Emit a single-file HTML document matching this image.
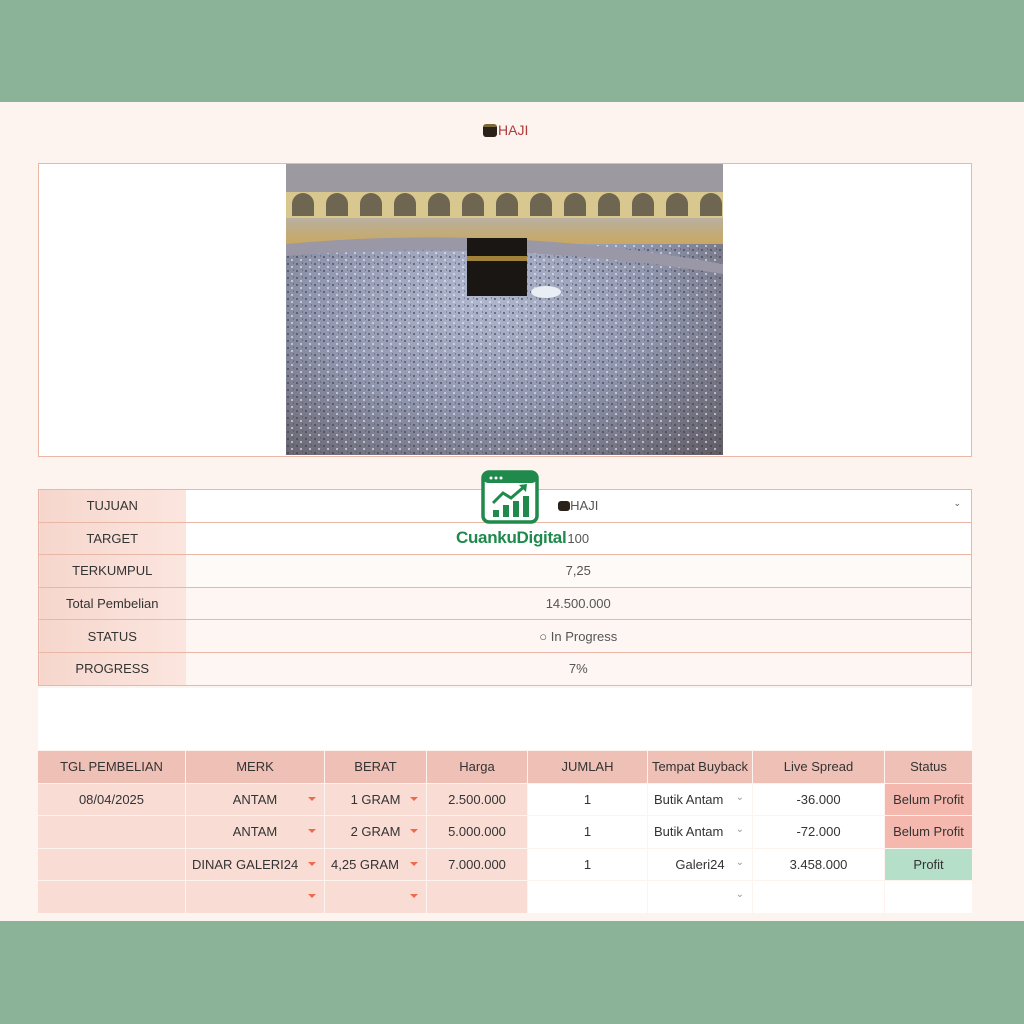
<!DOCTYPE html>
<html><head><meta charset="utf-8"><style>
*{margin:0;padding:0;box-sizing:border-box}
body{width:1024px;height:1024px;background:#fdf3ef;font-family:"Liberation Sans",sans-serif;position:relative;overflow:hidden;color:#333}
.band{position:absolute;left:0;width:1024px;background:#8ab398}
.abs{position:absolute}
.t1 td{border-bottom:1px solid #eab6a6;height:32.6px;font-size:13px;text-align:center}
.t1{border-collapse:collapse;border:1px solid #eab6a6}
.t1 td.l{background:linear-gradient(90deg,#f6d6cc,#fbe6df);width:147px;color:#333}
.t1 td.r{background:#fff;color:#555}
.t2{border-collapse:separate;border-spacing:1px 1px}
.t2 td{height:31.5px;font-size:13px;text-align:center;position:relative}
.t2 .h td{background:#efc0b6;color:#333}
.p{background:#f9ddd5}
.w{background:#fff}
.car{position:absolute;right:8px;top:13px;width:0;height:0;border-left:4px solid transparent;border-right:4px solid transparent;border-top:4px solid #ee6a4a}
.chev{position:absolute;right:8px;top:8px;font-size:10px;color:#999}
</style></head><body>
<div class="band" style="top:0;height:102px"></div>
<div class="band" style="top:921px;height:103px"></div>

<div class="abs" style="left:483px;top:124px;width:14px;height:13px;background:#2a2219;border-radius:3px;border-top:3px solid #7a6a3a"></div>
<div class="abs" style="left:498px;top:122px;font-size:14px;color:#b03a3a">HAJI</div>

<div class="abs" style="left:38px;top:163px;width:934px;height:294px;background:#fff;border:1px solid #eab6a6"></div>
<svg class="abs" style="left:286px;top:164px" width="437" height="291">
<defs>
<linearGradient id="a" x1="0" y1="0" x2="0" y2="1"><stop offset="0" stop-color="#b9b0a0"/><stop offset="1" stop-color="#c9a860"/></linearGradient>
<radialGradient id="c" cx="0.45" cy="0.45" r="0.8"><stop offset="0" stop-color="#b0b8d0"/><stop offset="0.5" stop-color="#8f95ad"/><stop offset="1" stop-color="#5e5860"/></radialGradient>
<pattern id="d" width="9" height="7" patternUnits="userSpaceOnUse"><rect x="1" y="1" width="2" height="2" fill="#3a3640" opacity=".55"/><rect x="5" y="4" width="2" height="2" fill="#e8ecf4" opacity=".6"/><rect x="7" y="0" width="1" height="2" fill="#4a4450" opacity=".4"/></pattern>
<pattern id="ar" width="34" height="26" patternUnits="userSpaceOnUse"><rect width="34" height="26" fill="#d8c890"/><path d="M6 26 V14 A11 11 0 0 1 28 14 V26Z" fill="#6e6650"/></pattern>
</defs>
<rect width="437" height="291" fill="url(#c)"/>
<rect y="80" width="437" height="211" fill="url(#d)"/>
<rect width="437" height="30" fill="#9c9aa0"/>
<rect y="28" width="437" height="26" fill="url(#ar)"/>
<rect y="54" width="437" height="26" fill="url(#a)"/>
<path d="M0 80 Q218 60 437 100 L437 110 Q218 75 0 92Z" fill="#9a97a6"/>
<rect x="181" y="74" width="60" height="58" fill="#1a1614"/>
<rect x="181" y="92" width="60" height="5" fill="#a0823a"/>
<ellipse cx="260" cy="128" rx="15" ry="6" fill="#e8eef4"/>
</svg>

<table class="t1 abs" style="left:38px;top:489px;width:934px">
<tr><td class="l">TUJUAN</td><td class="r" style="position:relative"><span style="display:inline-block;width:12px;height:10px;background:#2a2219;border-radius:3px;vertical-align:-1px"></span>HAJI<span style="position:absolute;right:10px;font-size:9px">&#8964;</span></td></tr>
<tr><td class="l">TARGET</td><td class="r">100</td></tr>
<tr><td class="l">TERKUMPUL</td><td class="r" style="background:#fefaf8">7,25</td></tr>
<tr><td class="l">Total Pembelian</td><td class="r" style="background:#fdf6f3">14.500.000</td></tr>
<tr><td class="l">STATUS</td><td class="r" style="background:#fdf6f3">○ In Progress</td></tr>
<tr><td class="l">PROGRESS</td><td class="r" style="background:#fdf6f3">7%</td></tr>
</table>

<svg class="abs" style="left:481px;top:470px" width="58" height="54"><rect x="2" y="2" width="54" height="50" rx="6" fill="#fff" stroke="#1f8a4c" stroke-width="3.5"/><rect x="2" y="2" width="54" height="11" rx="5" fill="#1f8a4c"/><circle cx="10" cy="8" r="1.5" fill="#fff"/><circle cx="15" cy="8" r="1.5" fill="#fff"/><circle cx="20" cy="8" r="1.5" fill="#fff"/><rect x="12" y="40" width="6" height="7" fill="#1f8a4c"/><rect x="22" y="35" width="6" height="12" fill="#1f8a4c"/><rect x="32" y="31" width="6" height="16" fill="#1f8a4c"/><rect x="42" y="26" width="6" height="21" fill="#1f8a4c"/><path d="M12 33 L22 23 L30 28 L44 16" stroke="#1f8a4c" stroke-width="3" fill="none"/><path d="M38 15 L46 14 L45 22Z" fill="#1f8a4c"/></svg>
<div class="abs" style="left:456px;top:528px;font-size:17px;font-weight:bold;color:#1f8a4c;letter-spacing:-0.3px">CuankuDigital</div>

<div class="abs" style="left:38px;top:688px;width:934px;height:62px;background:#fff"></div>
<table class="t2 abs" style="left:37px;top:750px;width:936px">
<tr class="h"><td style="width:147px">TGL PEMBELIAN</td><td style="width:138px">MERK</td><td style="width:101px">BERAT</td><td style="width:100px">Harga</td><td style="width:119px">JUMLAH</td><td style="width:104px">Tempat Buyback</td><td style="width:131px">Live Spread</td><td>Status</td></tr>
<tr><td class="p">08/04/2025</td><td class="p">ANTAM<i class="car"></i></td><td class="p">1 GRAM<i class="car"></i></td><td class="p">2.500.000</td><td class="w">1</td><td class="w" style="text-align:left;padding-left:6px">Butik Antam<span class="chev">&#8964;</span></td><td class="w">-36.000</td><td style="background:#f4b8ae">Belum Profit</td></tr>
<tr><td class="p"></td><td class="p">ANTAM<i class="car"></i></td><td class="p">2 GRAM<i class="car"></i></td><td class="p">5.000.000</td><td class="w">1</td><td class="w" style="text-align:left;padding-left:6px">Butik Antam<span class="chev">&#8964;</span></td><td class="w">-72.000</td><td style="background:#f4b8ae">Belum Profit</td></tr>
<tr><td class="p"></td><td class="p" style="text-align:left;padding-left:6px">DINAR GALERI24<i class="car"></i></td><td class="p" style="text-align:left;padding-left:6px">4,25 GRAM<i class="car"></i></td><td class="p">7.000.000</td><td class="w">1</td><td class="w">Galeri24<span class="chev">&#8964;</span></td><td class="w">3.458.000</td><td style="background:#b5dfc9">Profit</td></tr>
<tr><td class="p"></td><td class="p"><i class="car"></i></td><td class="p"><i class="car"></i></td><td class="p"></td><td class="w"></td><td class="w"><span class="chev">&#8964;</span></td><td class="w"></td><td class="w"></td></tr>
</table>
</body></html>
